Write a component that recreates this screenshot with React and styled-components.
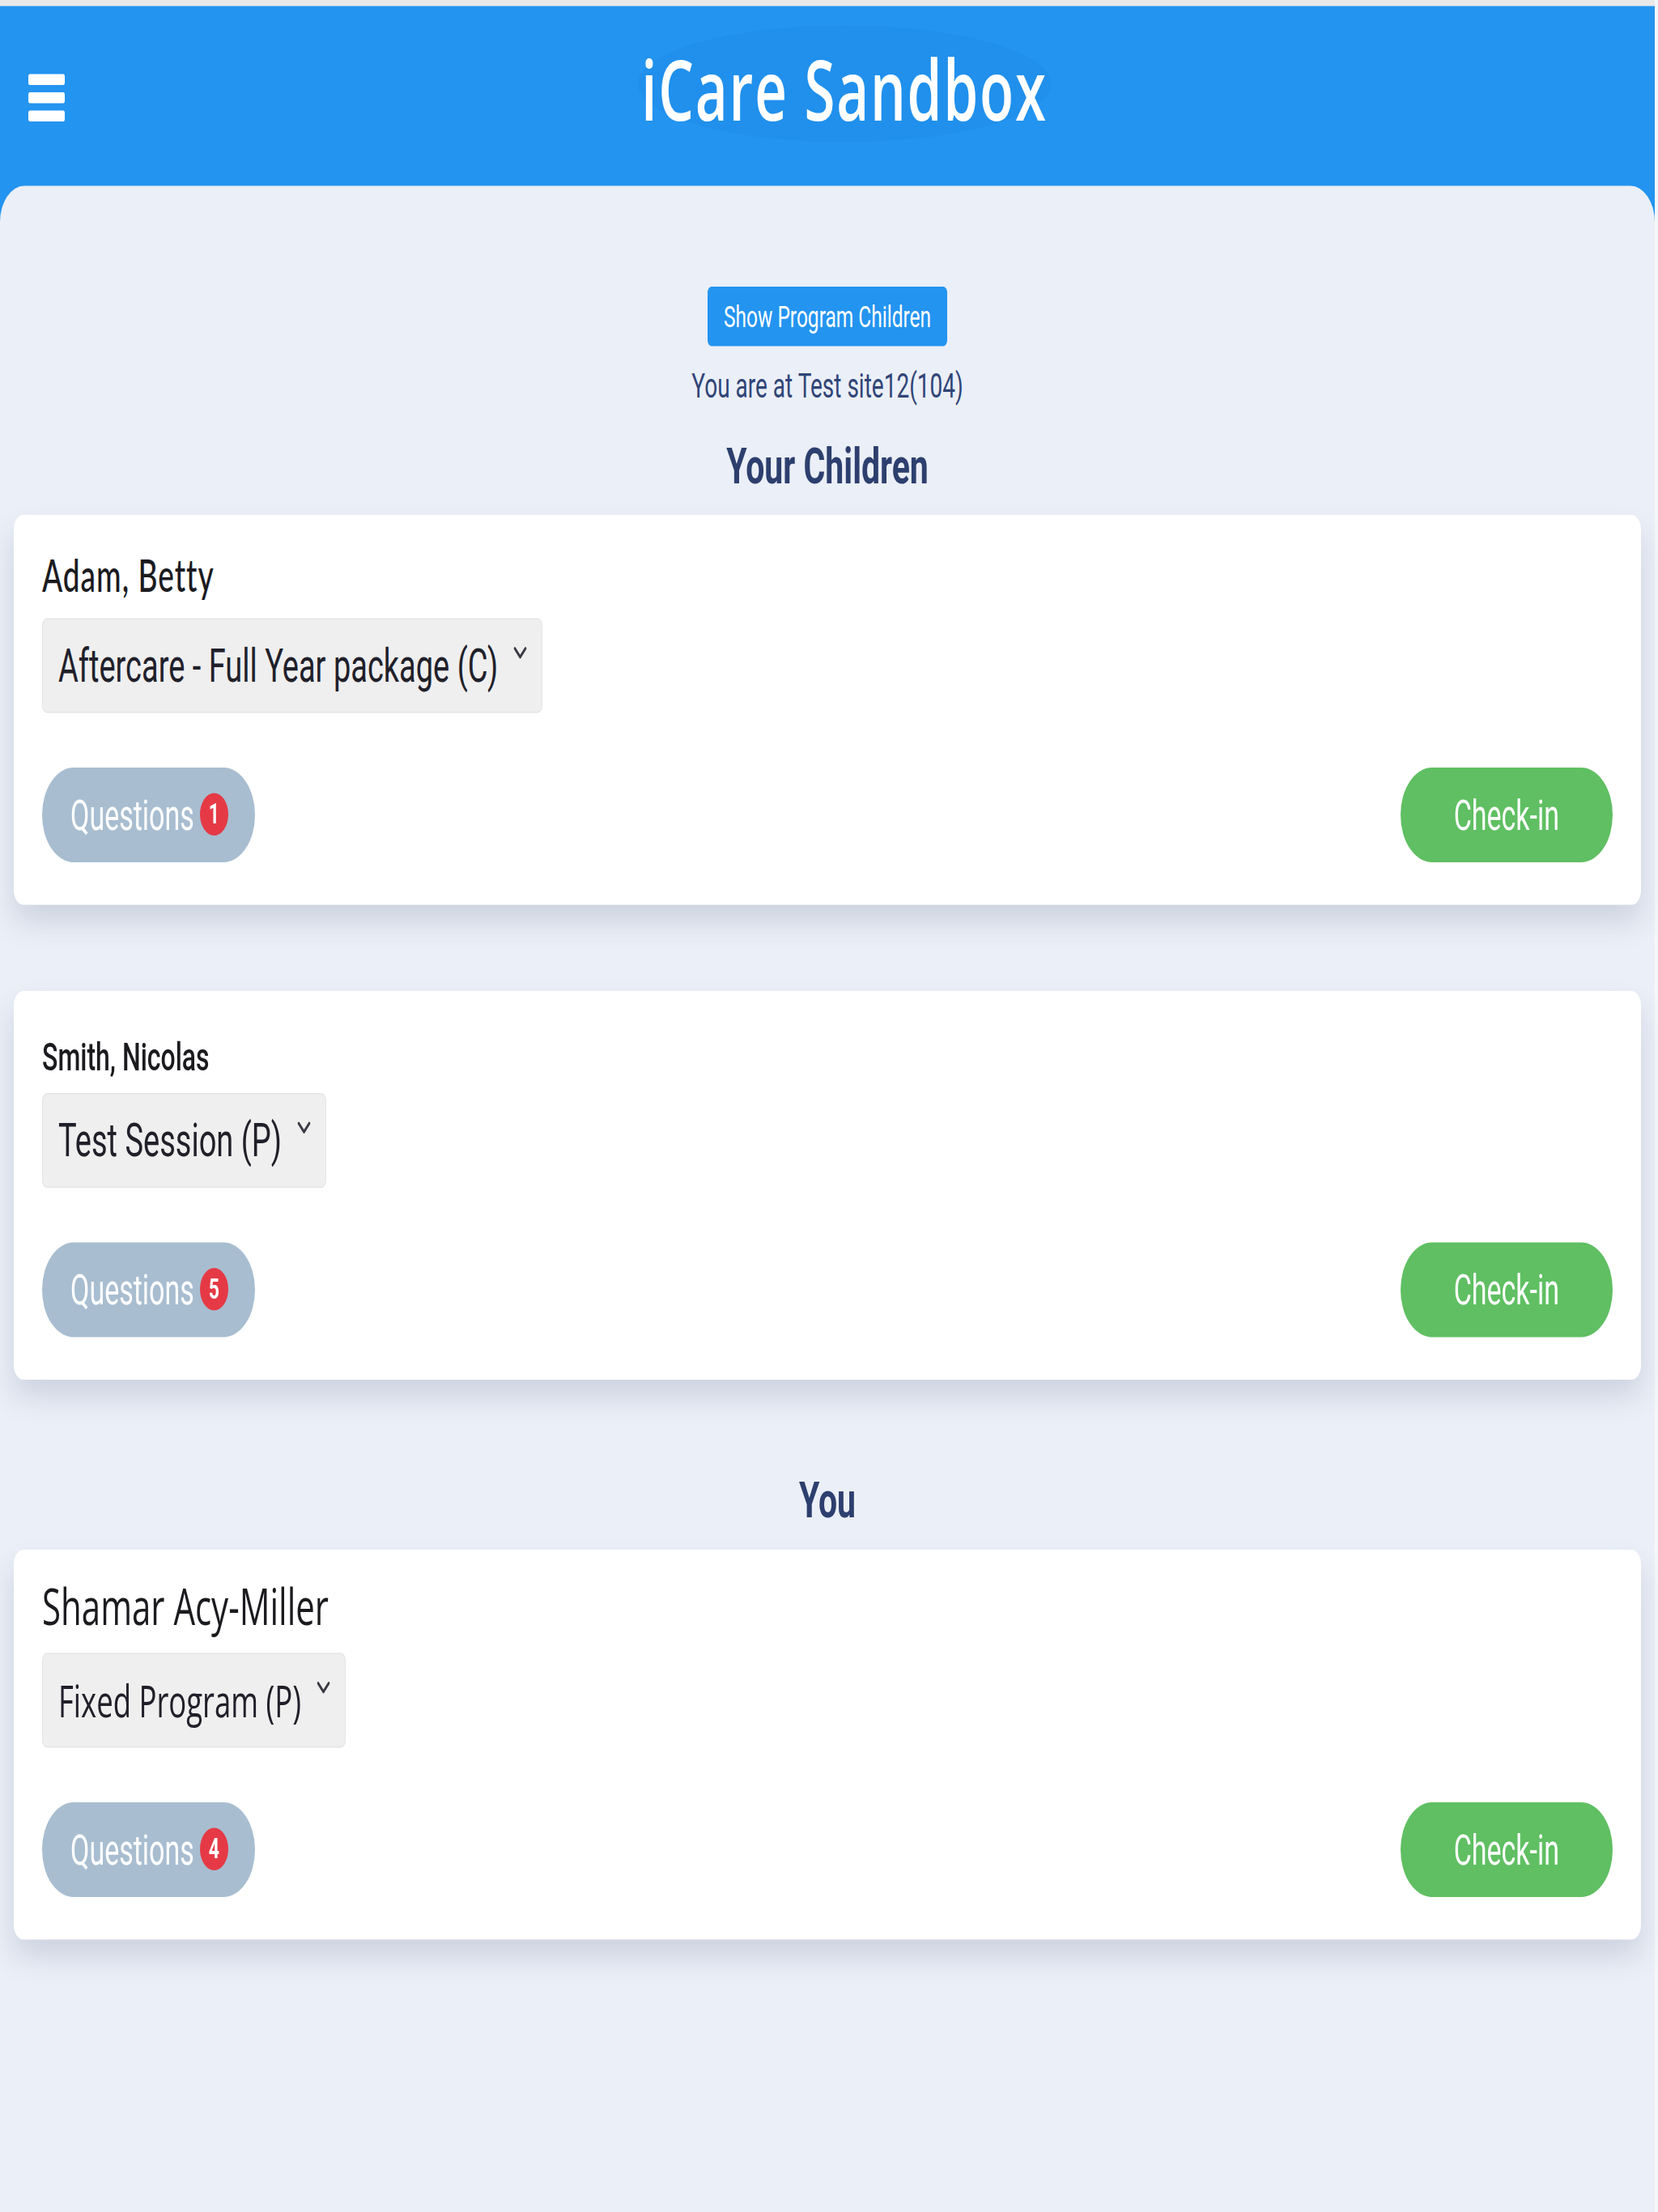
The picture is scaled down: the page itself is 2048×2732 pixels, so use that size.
import React from "react";
import styled, { createGlobalStyle } from "styled-components";

const GlobalStyle = createGlobalStyle`
  html, body {
    margin: 0;
    padding: 0;
    background: #f5f6f9;
  }
  body {
    min-height: 100vh;
    font-family: Roboto, "Liberation Sans", sans-serif;
  }
`;

// the capture is stretched vertically, so the page is laid out short and scaled
const Screen = styled.div`
  width: 2044px;
  height: 1822px;
  display: flex;
  flex-direction: column;
  transform: scaleY(1.5);
  transform-origin: top left;
  background: #e9e9ea;
  padding-top: 5px;
  box-sizing: border-box;
`;

const Header = styled.header`
  height: 178px;
  flex-shrink: 0;
  background: #2394f0;
  display: grid;
  grid-template-columns: 1fr auto 1fr;
  align-items: start;
  padding: 0 35px;
  box-sizing: border-box;
`;

const Burger = styled.div`
  margin-top: 56px;
  display: flex;
  flex-direction: column;
  gap: 6.5px;
  width: 45px;

  span {
    display: block;
    height: 8.5px;
    border-radius: 2px;
    background: #ffffff;
  }
`;

const Title = styled.h1`
  position: relative;
  z-index: 0;
  margin: 32px 0 0 42px;
  font-family: "Open Sans", "Liberation Sans", sans-serif;
  font-weight: 600;
  font-size: 69px;
  line-height: 70px;
  letter-spacing: 1.8px;
  color: #ffffff;

  &::before {
    content: "";
    position: absolute;
    left: 50%;
    top: 32px;
    width: 510px;
    height: 96px;
    transform: translate(-50%, -50%);
    border-radius: 50%;
    background: #1f8ce9;
    opacity: 0.55;
    z-index: -1;
  }
`;

const Panel = styled.main`
  flex: 1;
  margin-top: -30px;
  background: #ebeff7;
  border-radius: 30px 30px 0 0;
  padding: 83px 17px 0;
  display: flex;
  flex-direction: column;
  align-items: center;
  position: relative;
  z-index: 1;
`;

const ProgramButton = styled.button`
  height: 49px;
  padding: 0 20px;
  border: none;
  border-radius: 5px;
  background: #2394f0;
  color: #ffffff;
  font-family: Roboto, "Liberation Sans", sans-serif;
  font-size: 24.5px;
  cursor: pointer;
`;

const SiteText = styled.p`
  margin: 16px 0 0;
  font-size: 28px;
  line-height: 1.2;
  color: #2f4577;
`;

const SectionTitle = styled.h2`
  margin: ${(p) => p.$top}px 0 0;
  font-family: Roboto, "Liberation Sans", sans-serif;
  font-weight: 700;
  font-size: 41px;
  line-height: 1.2;
  color: #2d3f6e;
`;

const CardList = styled.section`
  align-self: stretch;
  display: flex;
  flex-direction: column;
  gap: 71px;
  margin-top: ${(p) => p.$top}px;
`;

const Card = styled.article`
  background: #ffffff;
  border-radius: 12px;
  padding: 18px 35px 35px;
  box-shadow: 0 14px 28px rgba(60, 75, 110, 0.17);
  display: flex;
  flex-direction: column;
  align-items: flex-start;
`;

const Name = styled.div`
  font-family: ${(p) => p.$family};
  font-size: ${(p) => p.$size}px;
  font-weight: ${(p) => p.$weight || 400};
  letter-spacing: ${(p) => p.$spacing || 0}px;
  line-height: 1.2;
  color: #1b1b1f;
  margin: ${(p) => p.$top}px 0 ${(p) => p.$bottom}px;
`;

const Select = styled.div`
  height: 78px;
  box-sizing: border-box;
  display: inline-flex;
  align-items: center;
  padding: 0 18px 0 19px;
  background: #efefef;
  border: 1px solid #e4e4e4;
  border-radius: 6px;
  font-family: ${(p) => p.$family};
  font-size: ${(p) => p.$size}px;
  color: #20202a;
  white-space: nowrap;

  svg {
    align-self: flex-start;
    margin-top: 22px;
    margin-left: 19px;
  }
`;

const Actions = styled.div`
  align-self: stretch;
  display: flex;
  justify-content: space-between;
  align-items: center;
  margin-top: 45px;
`;

const PillButton = styled.button`
  height: 78px;
  border: none;
  border-radius: 39px;
  display: inline-flex;
  align-items: center;
  gap: 7px;
  font-family: Roboto, "Liberation Sans", sans-serif;
  font-size: 34px;
  color: #ffffff;
  cursor: pointer;
  background: ${(p) => (p.$variant === "checkin" ? "#5fbf62" : "#a8bdd0")};
  padding: ${(p) => (p.$variant === "checkin" ? "0 66px" : "0 33px 0 35px")};
`;

const Badge = styled.span`
  width: 35px;
  height: 35px;
  border-radius: 50%;
  background: #e53a46;
  color: #ffffff;
  font-size: 23px;
  font-weight: 700;
  display: inline-flex;
  align-items: center;
  justify-content: center;
`;

const Chevron = () => (
  <svg width="17" height="11" viewBox="0 0 17 11">
    <polyline
      points="2,2 8.5,9 15,2"
      fill="none"
      stroke="#3a3a44"
      strokeWidth="2.6"
      strokeLinecap="round"
      strokeLinejoin="round"
    />
  </svg>
);

const ROBOTO = 'Roboto, "Liberation Sans", sans-serif';
const LATO = 'Lato, "Liberation Sans", sans-serif';
const OPEN = '"Open Sans", "Liberation Sans", sans-serif';

const children = [
  {
    name: "Adam, Betty",
    program: "Aftercare - Full Year package (C)",
    questions: 1,
    nameStyle: { family: LATO, size: 37, weight: 500, spacing: 1, top: 9, bottom: 13.6 },
    selectStyle: { family: ROBOTO, size: 38 },
  },
  {
    name: "Smith, Nicolas",
    program: "Test Session (P)",
    questions: 5,
    nameStyle: { family: ROBOTO, size: 32, weight: 500, top: 17.6, bottom: 10 },
    selectStyle: { family: ROBOTO, size: 38 },
  },
];

const you = {
  name: "Shamar Acy-Miller",
  program: "Fixed Program (P)",
  questions: 4,
  nameStyle: { family: OPEN, size: 42, top: 3.5, bottom: 13 },
  selectStyle: { family: OPEN, size: 36.5 },
};

const PersonCard = ({ person }) => {
  const n = person.nameStyle;
  const s = person.selectStyle;
  return (
    <Card>
      <Name
        $family={n.family}
        $size={n.size}
        $weight={n.weight}
        $spacing={n.spacing}
        $top={n.top}
        $bottom={n.bottom}
      >
        {person.name}
      </Name>
      <Select $family={s.family} $size={s.size}>
        <span>{person.program}</span>
        <Chevron />
      </Select>
      <Actions>
        <PillButton>
          Questions
          <Badge>{person.questions}</Badge>
        </PillButton>
        <PillButton $variant="checkin">Check-in</PillButton>
      </Actions>
    </Card>
  );
};

const App = () => (
  <>
    <GlobalStyle />
    <Screen>
      <Header>
        <Burger>
          <span />
          <span />
          <span />
        </Burger>
        <Title>iCare Sandbox</Title>
        <div />
      </Header>
      <Panel>
        <ProgramButton>Show Program Children</ProgramButton>
        <SiteText>You are at Test site12(104)</SiteText>
        <SectionTitle $top={25}>Your Children</SectionTitle>
        <CardList $top={15}>
          {children.map((c) => (
            <PersonCard key={c.name} person={c} />
          ))}
        </CardList>
        <SectionTitle $top={75}>You</SectionTitle>
        <CardList $top={15.7}>
          <PersonCard person={you} />
        </CardList>
      </Panel>
    </Screen>
  </>
);

export default App;
